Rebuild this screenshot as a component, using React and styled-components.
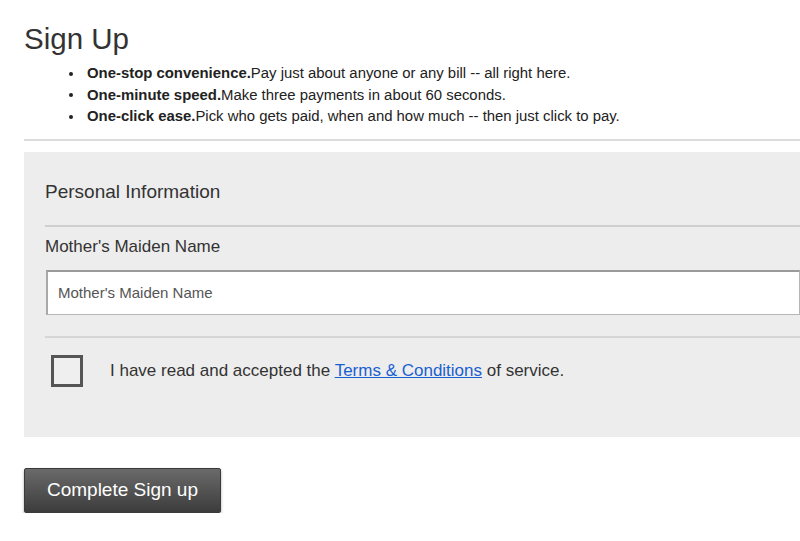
import React from 'react';
import styled, { createGlobalStyle } from 'styled-components';

const Global = createGlobalStyle`
	html, body {
		margin: 0;
		padding: 0;
		background: #fff;
		overflow: hidden;
	}
	body {
		font-family: "Liberation Sans", Arial, sans-serif;
		color: #333;
	}
`

const Page = styled.div`
	padding: 23px 0 0 24px;
`
const Title = styled.h1`
	margin: 0;
	font-size: 29.5px;
	font-weight: normal;
	line-height: 32px;
	color: #333;
`
const Perks = styled.ul`
	margin: 8px 0 0;
	padding-left: 45px;
	font-size: 14.9px;
	line-height: 21.5px;
	color: #222;
	list-style: none;

	li {
		display: flex;
		align-items: center;
	}
	li::before {
		content: '';
		width: 4px;
		height: 4px;
		border-radius: 50%;
		margin-right: 14px;
		background: #222;
		flex-shrink: 0;
	}
	b {
		font-weight: bold;
	}
`
const Rule = styled.hr`
	margin: 11px 0 0;
	border: 0;
	height: 2px;
	background: #dcdcdc;
`
const Panel = styled.section`
	margin-top: 11px;
	background: #ededed;
	padding: 28px 0 50px 21px;
`
const SectionTitle = styled.h2`
	margin: 0;
	font-size: 19px;
	font-weight: normal;
	line-height: 24px;
	color: #333;
	padding-bottom: 21px;
	border-bottom: 2px solid #cfcfcf;
`
const Field = styled.div`
	display: flex;
	flex-direction: column;
	padding: 10px 0 21px;
	border-bottom: 2px solid #d6d6d6;
`
const Label = styled.label`
	font-size: 17px;
	line-height: 20px;
	color: #333;
	margin-bottom: 13px;
`
const Input = styled.input`
	box-sizing: border-box;
	height: 45px;
	margin-left: 1px;
	padding: 0 10px;
	border: 1px solid #b5b5b5;
	border-top: 2px solid #9a9a9a;
	border-left: 2px solid #a8a8a8;
	background: #fff;
	font-family: "Liberation Sans", Arial, sans-serif;
	font-size: 15px;
	color: #333;
	outline: none;

	&::placeholder {
		color: #555;
	}
`
const Agree = styled.label`
	display: flex;
	align-items: center;
	gap: 27px;
	padding: 17px 0 0 6px;
	font-size: 17px;
	color: #333;
`
const Box = styled.span`
	box-sizing: border-box;
	width: 32px;
	height: 32px;
	border: 3px solid #555;
	background: #efefef;
	flex-shrink: 0;
`
const Link = styled.a`
	color: #1a5fd0;
	text-decoration: underline;
`
const Submit = styled.button`
	margin-top: 31px;
	width: 197px;
	height: 45px;
	border: 1px solid #3a3a3a;
	border-radius: 2px;
	background: linear-gradient(#6a6a6a, #3c3c3c);
	box-shadow: 0 2px 3px rgba(0, 0, 0, 0.35);
	color: #fff;
	font-family: "Liberation Sans", Arial, sans-serif;
	font-size: 19px;
	cursor: pointer;
`

const perks = [
	['One-stop convenience.', 'Pay just about anyone or any bill -- all right here.'],
	['One-minute speed.', 'Make three payments in about 60 seconds.'],
	['One-click ease.', 'Pick who gets paid, when and how much -- then just click to pay.'],
]

const App = () => {
	return (
		<Page>
			<Global />
			<Title>Sign Up</Title>
			<Perks>
				{perks.map((item, index) => (
					<li key={index}><span><b>{item[0]}</b>{item[1]}</span></li>
				))}
			</Perks>
			<Rule />
			<Panel>
				<SectionTitle>Personal Information</SectionTitle>
				<Field>
					<Label htmlFor="maiden">Mother's Maiden Name</Label>
					<Input id="maiden" placeholder="Mother's Maiden Name" />
				</Field>
				<Agree>
					<Box />
					<span>I have read and accepted the <Link href="#terms">Terms &amp; Conditions</Link> of service.</span>
				</Agree>
			</Panel>
			<Submit>Complete Sign up</Submit>
		</Page>
	)
}

export default App
